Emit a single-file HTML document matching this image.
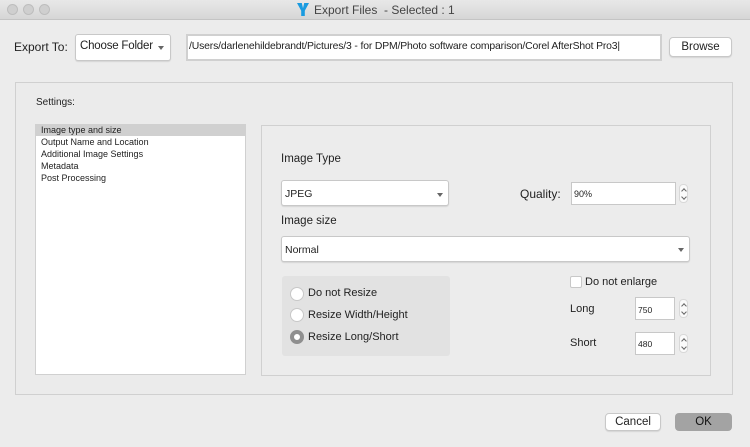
<!DOCTYPE html>
<html><head><style>
*{margin:0;padding:0;box-sizing:border-box}
body{width:750px;height:447px;background:#ececec;font-family:"Liberation Sans",sans-serif;font-size:12px;color:#222;position:relative;overflow:hidden}
.a{position:absolute;white-space:nowrap}
.tb{left:0;top:0;width:750px;height:20px;background:linear-gradient(#e8e8e8,#d6d6d6);border-bottom:1px solid #c4c4c4}
.dot{width:11px;height:11px;border-radius:50%;background:#cfcfcf;border:1px solid #bdbdbd;top:4px}
.btn{background:#fff;border:1px solid #c8c8c8;border-radius:4px;box-shadow:0 1px 1px rgba(0,0,0,.1)}
.inp{background:#fff;border:1px solid #c8c8c8}
.arrow{width:0;height:0;border-left:3px solid transparent;border-right:3px solid transparent;border-top:4px solid #666}
.step{width:9px;height:19px;border-radius:4px;border:1px solid #d8d8d8;background:#fafafa}
.step:before{content:"";position:absolute;left:2px;top:4px;width:3px;height:3px;border-left:1px solid #666;border-top:1px solid #666;transform:rotate(45deg)}
.step:after{content:"";position:absolute;left:2px;top:10px;width:3px;height:3px;border-right:1px solid #666;border-bottom:1px solid #666;transform:rotate(45deg)}
.radio{width:14px;height:14px;border-radius:50%;background:#fff;border:1px solid #c8c8c8}
</style></head><body>
<div class="a tb"></div>
<div class="a dot" style="left:7px"></div><div class="a dot" style="left:23px"></div><div class="a dot" style="left:39px"></div>
<div class="a" style="left:297px;top:3px;width:12px;height:13px;background:#1a9be0;clip-path:polygon(0 0,40% 0,50% 40%,60% 0,100% 0,65% 60%,65% 100%,35% 100%,35% 60%)"></div>
<div class="a" style="left:314px;top:3px;font-size:12px;color:#444">Export Files &nbsp;- Selected : 1</div>

<div class="a" style="left:14px;top:40px;font-size:12px">Export To:</div>
<div class="a btn" style="left:75px;top:34px;width:96px;height:27px;border-radius:3px"></div>
<div class="a" style="left:80px;top:40px;font-size:11.5px;letter-spacing:-0.2px">Choose Folder</div>
<div class="a arrow" style="left:158px;top:46px"></div>
<div class="a inp" style="left:186px;top:34px;width:476px;height:27px;border:2px solid #d0d0d0"></div>
<div class="a" style="left:189px;top:41px;font-size:10.4px;letter-spacing:-0.15px">/Users/darlenehildebrandt/Pictures/3 - for DPM/Photo software comparison/Corel AfterShot Pro3|</div>
<div class="a btn" style="left:669px;top:37px;width:63px;height:20px;text-align:center;line-height:19px;font-size:11.5px">Browse</div>

<div class="a" style="left:15px;top:82px;width:718px;height:313px;border:1px solid #d0d0d0;background:#ebebeb"></div>
<div class="a" style="left:36px;top:97px;font-size:10px">Settings:</div>
<div class="a" style="left:35px;top:124px;width:211px;height:251px;background:#fff;border:1px solid #d0d0d0"></div>
<div class="a" style="left:36px;top:125px;width:209px;height:11px;background:#d0d0d0"></div>
<div class="a" style="left:41px;top:124px;font-size:9px;line-height:12px">Image type and size<br>Output Name and Location<br>Additional Image Settings<br>Metadata<br>Post Processing</div>

<div class="a" style="left:261px;top:125px;width:450px;height:251px;border:1px solid #d0d0d0;background:#ececec"></div>
<div class="a" style="left:281px;top:153px;font-size:11.5px">Image Type</div>
<div class="a btn" style="left:281px;top:180px;width:168px;height:26px;border-radius:3px"></div>
<div class="a" style="left:285px;top:188px;font-size:10.5px">JPEG</div>
<div class="a arrow" style="left:437px;top:193px"></div>
<div class="a" style="left:520px;top:187px;font-size:12px">Quality:</div>
<div class="a inp" style="left:571px;top:182px;width:105px;height:23px"></div>
<div class="a" style="left:574px;top:189px;font-size:9px">90%</div>
<div class="a step" style="left:679px;top:184px"></div>
<div class="a" style="left:281px;top:215px;font-size:11.5px">Image size</div>
<div class="a btn" style="left:281px;top:236px;width:409px;height:26px;border-radius:3px"></div>
<div class="a" style="left:285px;top:244px;font-size:10.5px">Normal</div>
<div class="a arrow" style="left:678px;top:248px"></div>

<div class="a" style="left:282px;top:276px;width:168px;height:80px;background:#e2e2e2;border-radius:3px"></div>
<div class="a radio" style="left:290px;top:287px"></div>
<div class="a" style="left:308px;top:287px;font-size:11px">Do not Resize</div>
<div class="a radio" style="left:290px;top:308px"></div>
<div class="a" style="left:308px;top:309px;font-size:11px">Resize Width/Height</div>
<div class="a radio" style="left:290px;top:330px;background:#fff;border:4px solid #8f8f8f"></div>
<div class="a" style="left:308px;top:331px;font-size:11px">Resize Long/Short</div>

<div class="a" style="left:570px;top:276px;width:12px;height:12px;background:#fff;border:1px solid #c8c8c8;border-radius:2px"></div>
<div class="a" style="left:585px;top:276px;font-size:11px">Do not enlarge</div>
<div class="a" style="left:570px;top:303px;font-size:11px">Long</div>
<div class="a inp" style="left:635px;top:297px;width:40px;height:23px"></div>
<div class="a" style="left:638px;top:305px;font-size:8.5px">750</div>
<div class="a step" style="left:679px;top:299px"></div>
<div class="a" style="left:570px;top:337px;font-size:11px">Short</div>
<div class="a inp" style="left:635px;top:332px;width:40px;height:23px"></div>
<div class="a" style="left:638px;top:339px;font-size:8.5px">480</div>
<div class="a step" style="left:679px;top:334px"></div>

<div class="a btn" style="left:605px;top:413px;width:56px;height:18px;text-align:center;line-height:17px;font-size:11.5px">Cancel</div>
<div class="a" style="left:675px;top:413px;width:57px;height:18px;text-align:center;line-height:18px;font-size:11.5px;background:#a3a3a3;border-radius:4px;color:#111">OK</div>
</body></html>
